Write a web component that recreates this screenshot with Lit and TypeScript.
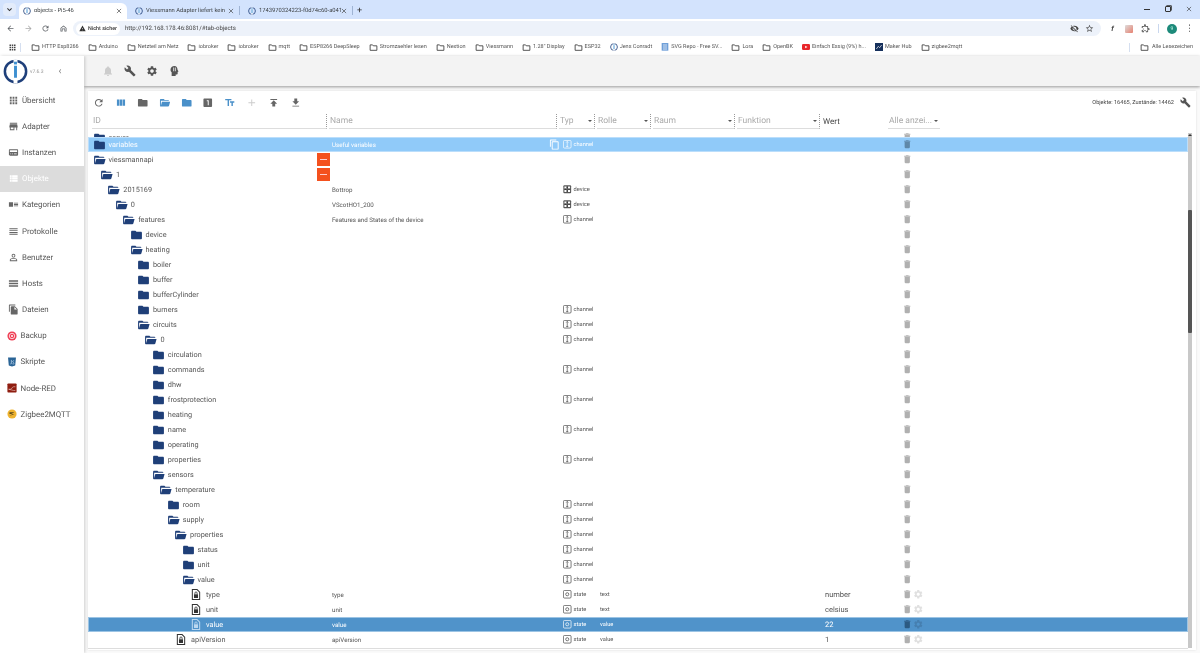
import { LitElement, html, css, svg } from "lit";
import { customElement } from "lit/decorators.js";

const P: Record<string, string> = {
  folder: "M10 4H4c-1.1 0-1.99.9-1.99 2L2 18c0 1.1.9 2 2 2h16c1.1 0 2-.9 2-2V8c0-1.1-.9-2-2-2h-8l-2-2z",
  open: "M19,20H4C2.89,20 2,19.1 2,18V6C2,4.89 2.89,4 4,4H10L12,6H19A2,2 0 0,1 21,8H21L4,8V18L6.14,10H23.21L20.93,18.5C20.7,19.37 19.92,20 19,20Z",
  refresh: "M17.65 6.35C16.2 4.9 14.21 4 12 4c-4.42 0-7.99 3.58-7.99 8s3.57 8 7.99 8c3.73 0 6.84-2.55 7.73-6h-2.08c-.82 2.33-3.04 4-5.65 4-3.31 0-6-2.69-6-6s2.69-6 6-6c1.66 0 3.14.69 4.22 1.78L13 11h7V4l-2.35 2.35z",
  columns: "M10 18h5V5h-5v13zm-6 0h5V5H4v13zM16 5v13h5V5h-5z",
  bell: "M12 22c1.1 0 2-.9 2-2h-4c0 1.1.89 2 2 2zm6-6v-5c0-3.07-1.64-5.64-4.5-6.32V4c0-.83-.67-1.5-1.5-1.5s-1.5.67-1.5 1.5v.68C7.63 5.36 6 7.92 6 11v5l-2 2v1h16v-1l-2-2z",
  wrench: "M22.7 19l-9.1-9.1c.9-2.3.4-5-1.5-6.9-2-2-5-2.4-7.4-1.3L9 6 6 9 1.6 4.7C.4 7.1.9 10.1 2.9 12.1c1.9 1.9 4.6 2.4 6.9 1.5l9.1 9.1c.4.4 1 .4 1.4 0l2.3-2.3c.5-.4.5-1.1.1-1.4z",
  gear: "M19.14 12.94c.04-.3.06-.61.06-.94 0-.32-.02-.64-.07-.94l2.03-1.58c.18-.14.23-.41.12-.61l-1.92-3.32c-.12-.22-.37-.29-.59-.22l-2.39.96c-.5-.38-1.03-.7-1.62-.94l-.36-2.54c-.04-.24-.24-.41-.48-.41h-3.84c-.24 0-.43.17-.47.41l-.36 2.54c-.59.24-1.13.57-1.62.94l-2.39-.96c-.22-.08-.47 0-.59.22L2.74 8.87c-.12.21-.08.47.12.61l2.03 1.58c-.05.3-.09.63-.09.94s.02.64.07.94l-2.03 1.58c-.18.14-.23.41-.12.61l1.92 3.32c.12.22.37.29.59.22l2.39-.96c.5.38 1.03.7 1.62.94l.36 2.54c.05.24.24.41.48.41h3.84c.24 0 .44-.17.47-.41l.36-2.54c.59-.24 1.13-.56 1.62-.94l2.39.96c.22.08.47 0 .59-.22l1.92-3.32c.12-.22.07-.47-.12-.61l-2.01-1.58zM12 15.6c-1.98 0-3.6-1.62-3.6-3.6s1.62-3.6 3.6-3.6 3.6 1.62 3.6 3.6-1.62 3.6-3.6 3.6z",
  trash: "M6 19c0 1.1.9 2 2 2h8c1.1 0 2-.9 2-2V7H6v12zM19 4h-3.5l-1-1h-5l-1 1H5v2h14V4z",
  add: "M19 13h-6v6h-2v-6H5v-2h6V5h2v6h6v2z",
  publish: "M5 4v2h14V4H5zm0 10h4v6h6v-6h4l-7-7-7 7z",
  getapp: "M19 9h-4V3H9v6H5l7 7 7-7zM5 18v2h14v-2H5z",
  text: "M2.5 4v3h5v12h3V7h5V4h-13zm19 5h-9v3h3v7h3v-7h3V9z",
  one: "M19 3H5c-1.1 0-2 .9-2 2v14c0 1.1.9 2 2 2h14c1.1 0 2-.9 2-2V5c0-1.1-.9-2-2-2zm-5 14h-2V9h-2V7h4v10z",
  apps: "M4 8h4V4H4v4zm6 12h4v-4h-4v4zm-6 0h4v-4H4v4zm0-6h4v-4H4v4zm6 0h4v-4h-4v4zm6-10v4h4V4h-4zm-6 4h4V4h-4v4zm6 6h4v-4h-4v4zm0 6h4v-4h-4v4z",
  store: "M20 4H4v2h16V4zm1 10v-2l-1-5H4l-1 5v2h1v6h10v-6h4v6h2v-6h1zm-9 4H6v-4h6v4z",
  inst: "M20 5H4c-1.1 0-2 .9-2 2v10c0 1.1.9 2 2 2h16c1.1 0 2-.9 2-2V7c0-1.1-.9-2-2-2zM4 7h16v4H4V7zm3 9H5v-2h2v2zm4 0H9v-2h2v2zm8 0h-6v-2h6v2z",
  list: "M4 14h4v-4H4v4zm0 5h4v-4H4v4zM4 9h4V5H4v4zm5 5h12v-4H9v4zm0 5h12v-4H9v4zM9 5v4h12V5H9z",
  cats: "M2 7h9v10H2zM13 8h9v2h-9zM13 11h9v2h-9zM13 14h9v2h-9z",
  logs: "M3 15h18v-2H3v2zm0 4h18v-2H3v2zm0-8h18V9H3v2zm0-6v2h18V5H3z",
  person: "M12 5.9c1.16 0 2.1.94 2.1 2.1s-.94 2.1-2.1 2.1S9.9 9.16 9.9 8s.94-2.1 2.1-2.1m0 9c2.97 0 6.1 1.46 6.1 2.1v1.1H5.9V17c0-.64 3.13-2.1 6.1-2.1M12 4C9.79 4 8 5.79 8 8s1.79 4 4 4 4-1.79 4-4-1.79-4-4-4zm0 9c-2.67 0-8 1.34-8 4v3h16v-3c0-2.66-5.33-4-8-4z",
  hosts: "M2 5h20v3.2H2zM2 10.4h20v3.2H2zM2 15.8h20V19H2z",
  files: "M16 1H4c-1.1 0-2 .9-2 2v14h2V3h12V1zm-1 4l6 6v10c0 1.1-.9 2-2 2H7.99C6.89 23 6 22.1 6 21l.01-14c0-1.1.89-2 1.99-2h7zm-1 7h5.5L14 6.5V12z",
  head: "M13 2C8.5 2 5 5.3 5 9.5c0 2.3.9 3.9 2.3 5.1V22h8v-3h2.4c.9 0 1.6-.7 1.6-1.6V14l1.7-.9-1.9-3.6C18.8 5.3 16.8 2 13 2zm-2.4 3.2h1.6v7.2h-1.6zm3.2 0h1.6v7.2h-1.6z",
  copy: "M16 1H4c-1.1 0-2 .9-2 2v14h2V3h12V1zm3 4H8c-1.1 0-2 .9-2 2v14c0 1.1.9 2 2 2h11c1.1 0 2-.9 2-2V7c0-1.1-.9-2-2-2zm0 16H8V7h11v14z",
  back: "M20 11H7.83l5.59-5.59L12 4l-8 8 8 8 1.41-1.41L7.83 13H20v-2z",
  fwd: "M12 4l-1.41 1.41L16.17 11H4v2h12.17l-5.58 5.59L12 20l8-8z",
  home: "M12 4 4 10.5V20h5.5v-6h5v6H20v-9.5L12 4zm6 14h-1.6v-6H7.6v6H6v-6.6l6-4.9 6 4.9V18z",
  star: "M22 9.24l-7.19-.62L12 2 9.19 8.63 2 9.24l5.46 4.73L5.82 21 12 17.27 18.18 21l-1.63-7.03L22 9.24zM12 15.4l-3.76 2.27 1-4.28-3.32-2.88 4.38-.38L12 6.1l1.71 4.04 4.38.38-3.32 2.88 1 4.28L12 15.4z",
  puzzle: "M20.5 11H19V7c0-1.1-.9-2-2-2h-4V3.5a2.5 2.5 0 0 0-5 0V5H4c-1.1 0-2 .9-2 2v3.8h1.5a2.7 2.7 0 0 1 0 5.4H2V20c0 1.1.9 2 2 2h3.8v-1.5a2.7 2.7 0 0 1 5.4 0V22H17c1.1 0 2-.9 2-2v-4h1.5a2.5 2.5 0 0 0 0-5zm0 3H17v6h-2.1a4.7 4.7 0 0 0-8.8 0H4v-2.1a4.7 4.7 0 0 0 0-8.8V7h6V3.5a.5.5 0 0 1 1 0V7h6v6h3.5a.5.5 0 0 1 0 1z",
  warn: "M1 21h22L12 2 1 21zm12-3h-2v-2h2v2zm0-4h-2v-4h2v4z",
  eyeoff: "M12 7c2.76 0 5 2.24 5 5 0 .65-.13 1.26-.36 1.83l2.92 2.92c1.51-1.26 2.7-2.89 3.43-4.75C21.27 7.61 17 4.5 12 4.5c-1.4 0-2.74.25-3.98.7l2.16 2.16C10.74 7.13 11.35 7 12 7zM2 4.27l2.28 2.28.46.46A11.8 11.8 0 0 0 1 12c1.73 4.39 6 7.5 11 7.5 1.55 0 3.03-.3 4.38-.84l.42.42L19.73 22 21 20.73 3.27 3 2 4.27zM7.53 9.8l1.55 1.55c-.05.21-.08.43-.08.65 0 1.66 1.34 3 3 3 .22 0 .44-.03.65-.08l1.55 1.55c-.67.33-1.41.53-2.2.53-2.76 0-5-2.24-5-5 0-.79.2-1.53.53-2.2z",
};

const ico = (name: string, cls = "") =>
  html`<svg class="ico ${cls}" viewBox="0 0 24 24"><path d=${P[name]}></path></svg>`;

const logo = (cls: string) => html`<svg class=${cls} viewBox="0 0 24 24">
  ${svg`<circle cx="12" cy="12" r="10.2" fill="none" stroke="#1e3f7a" stroke-width="2.4"></circle>
  <rect x="10.1" y="0.5" width="3.8" height="23" fill="#fff"></rect>
  <rect x="10.6" y="6.5" width="2.8" height="11.5" fill="#3d8fd1"></rect>
  <rect x="10.6" y="2.6" width="2.8" height="2.6" fill="#3d8fd1"></rect>`}
</svg>`;

const typeIcon = (t: string) => {
  if (t === "channel")
    return html`<svg class="tico" viewBox="0 0 12 12">${svg`<rect x=".6" y=".6" width="10.8" height="10.8" rx="1.6" fill="none" stroke="currentColor" stroke-width="1"></rect><path d="M6 2v8M4.5 3.6 6 2l1.5 1.6M4.5 8.4 6 10l1.5-1.6" fill="none" stroke="currentColor" stroke-width=".9"></path>`}</svg>`;
  if (t === "device")
    return html`<svg class="tico" viewBox="0 0 12 12">${svg`<rect x=".5" y=".5" width="11" height="11" rx="1.4" fill="#555"></rect><path d="M2 2h3v3H2zM7 2h3v3H7zM2 7h3v3H2zM7 7h3v3H7z" fill="#fff"></path><path d="M5 3.5h2M5 8.5h2M3.5 5v2M8.5 5v2" stroke="#222" stroke-width=".8"></path>`}</svg>`;
  return html`<svg class="tico" viewBox="0 0 12 12">${svg`<rect x=".6" y=".6" width="10.8" height="10.8" rx="1.6" fill="none" stroke="currentColor" stroke-width="1"></rect><circle cx="6" cy="6" r="2.2" fill="none" stroke="currentColor" stroke-width="1"></circle>`}</svg>`;
};

const fileIcon = () => html`<svg class="file" viewBox="0 0 10 12">${svg`<path d="M1 .6h5.2L9 3.4V11.4H1z" fill="#fff" stroke="currentColor" stroke-width="1.1"></path><rect x="2.8" y="5.800" width="4.400" height="4" fill="currentColor"></rect><path d="M3.800 6V4.400a1.200 1.200 0 0 1 2.400 0V6" fill="none" stroke="currentColor" stroke-width=".9"></path>`}</svg>`;

interface Row { id: string; lvl: number; ic: "c" | "o" | "f"; name?: string; type?: string; role?: string; val?: string; minus?: boolean; sel?: "light" | "dark"; }

const rows: Row[] = [
  { id: "variables", lvl: 0, ic: "c", name: "Useful variables", type: "channel", sel: "light" },
  { id: "viessmannapi", lvl: 0, ic: "o", minus: true },
  { id: "1", lvl: 1, ic: "o", minus: true },
  { id: "2015169", lvl: 2, ic: "o", name: "Bottrop", type: "device" },
  { id: "0", lvl: 3, ic: "o", name: "VScotHO1_200", type: "device" },
  { id: "features", lvl: 4, ic: "o", name: "Features and States of the device", type: "channel" },
  { id: "device", lvl: 5, ic: "c" },
  { id: "heating", lvl: 5, ic: "o" },
  { id: "boiler", lvl: 6, ic: "c" },
  { id: "buffer", lvl: 6, ic: "c" },
  { id: "bufferCylinder", lvl: 6, ic: "c" },
  { id: "burners", lvl: 6, ic: "c", type: "channel" },
  { id: "circuits", lvl: 6, ic: "o", type: "channel" },
  { id: "0", lvl: 7, ic: "o", type: "channel" },
  { id: "circulation", lvl: 8, ic: "c" },
  { id: "commands", lvl: 8, ic: "c", type: "channel" },
  { id: "dhw", lvl: 8, ic: "c" },
  { id: "frostprotection", lvl: 8, ic: "c", type: "channel" },
  { id: "heating", lvl: 8, ic: "c" },
  { id: "name", lvl: 8, ic: "c", type: "channel" },
  { id: "operating", lvl: 8, ic: "c" },
  { id: "properties", lvl: 8, ic: "c", type: "channel" },
  { id: "sensors", lvl: 8, ic: "o" },
  { id: "temperature", lvl: 9, ic: "o" },
  { id: "room", lvl: 10, ic: "c", type: "channel" },
  { id: "supply", lvl: 10, ic: "o", type: "channel" },
  { id: "properties", lvl: 11, ic: "o", type: "channel" },
  { id: "status", lvl: 12, ic: "c", type: "channel" },
  { id: "unit", lvl: 12, ic: "c", type: "channel" },
  { id: "value", lvl: 12, ic: "o", type: "channel" },
  { id: "type", lvl: 13, ic: "f", name: "type", type: "state", role: "text", val: "number" },
  { id: "unit", lvl: 13, ic: "f", name: "unit", type: "state", role: "text", val: "celsius" },
  { id: "value", lvl: 13, ic: "f", name: "value", type: "state", role: "value", val: "22", sel: "dark" },
  { id: "apiVersion", lvl: 11, ic: "f", name: "apiVersion", type: "state", role: "value", val: "1" },
];

const nav = [
  ["apps", "Übersicht"], ["store", "Adapter"], ["inst", "Instanzen"], ["list", "Objekte"],
  ["cats", "Kategorien"], ["logs", "Protokolle"], ["person", "Benutzer"], ["hosts", "Hosts"],
  ["files", "Dateien"], ["backup", "Backup"], ["js", "Skripte"], ["red", "Node-RED"], ["zig", "Zigbee2MQTT"],
];

const navColor = (k: string) => {
  if (k === "backup") return html`<svg class="navc" viewBox="0 0 24 24">${svg`<circle cx="12" cy="12" r="11" fill="#ef3f55"></circle><circle cx="12" cy="12" r="6.5" fill="none" stroke="#fff" stroke-width="1.8"></circle><circle cx="12" cy="12" r="2.4" fill="#fff"></circle>`}</svg>`;
  if (k === "js") return html`<svg class="navc" viewBox="0 0 24 24">${svg`<path d="M2.5 1h19l-1.8 19.5L12 23l-7.7-2.5z" fill="#2a6496"></path><path d="M10.5 7v9l-2.5.7M13 16.3c2.5 1 4 .2 4-1.5s-3.5-1.8-3.5-3.6S15 8.700 17 9.300" fill="none" stroke="#cfe3f4" stroke-width="1.600"></path>`}</svg>`;
  if (k === "red") return html`<svg class="navc" viewBox="0 0 24 24">${svg`<rect x="1" y="1" width="22" height="22" rx="2" fill="#8f1d10"></rect><path d="M4 15h4c4 0 4-6 8-6h4M4 15c5 0 7 3 12 3h4" fill="none" stroke="#e8c3bd" stroke-width="1.500"></path>`}</svg>`;
  return html`<svg class="navc" viewBox="0 0 24 24">${svg`<circle cx="12" cy="12" r="11" fill="#eeb32f"></circle><path d="M6 8h12l-8 4h8L6 17l7-5H6z" fill="#5b4a1a"></path>`}</svg>`;
};

const marks: [string, string][] = [
  ["f", "HTTP Esp8266"], ["f", "Arduino"], ["f", "Netzteil am Netz"], ["f", "iobroker"], ["f", "iobroker"],
  ["f", "mqtt"], ["f", "ESP8266 DeepSleep"], ["f", "Stromzaehler lesen"], ["f", "Nextion"], ["f", "Viessmann"],
  ["f", '1.28" Display'], ["f", "ESP32"], ["io", "Jens Conradt"], ["svg", "SVG Repo - Free SV..."], ["f", "Lora"],
  ["f", "OpenBK"], ["yt", "Einfach Essig (9%) h..."], ["mh", "Maker Hub"], ["f", "zigbee2mqtt"],
];

const bmFolder = () => html`<svg class="bmf" viewBox="0 0 24 24"><path d="M3 5h6.500l2 2.500H21v12H3z" fill="none" stroke="#444" stroke-width="2.400"></path></svg>`;
const bmIcon = (k: string) => {
  if (k === "io") return logo("bmi");
  if (k === "svg") return html`<svg class="bmi" viewBox="0 0 12 12">${svg`<rect width="10" height="11.500" x="1" fill="#6f9fd8"></rect><path d="M3 3h6M3 6h6M3 9h6" stroke="#fff" stroke-width="1"></path>`}</svg>`;
  if (k === "yt") return html`<svg class="bmi" viewBox="0 0 12 12">${svg`<rect y="1.500" width="12" height="9" rx="2" fill="#e8262a"></rect><path d="M4.800 4v4l3.400-2z" fill="#fff"></path>`}</svg>`;
  if (k === "mh") return html`<svg class="bmi" viewBox="0 0 12 12">${svg`<rect width="12" height="12" fill="#16305c"></rect><path d="M2 9l3-4 2 2 3-4" stroke="#fff" stroke-width="1" fill="none"></path>`}</svg>`;
  return bmFolder();
};

const winClose = () => html`<svg class="wc" viewBox="0 0 10 10"><path d="M1.500 1.500l7 7M8.500 1.500l-7 7" stroke="#333" stroke-width="1" fill="none"></path></svg>`;

@customElement("app-root")
export class AppRoot extends LitElement {
  static styles = css`
    :host { display: block; width: 1200px; height: 653px; overflow: hidden; font-family: Roboto, "Liberation Sans", sans-serif; background: #fff; color: #555; text-rendering: geometricPrecision; }
    * { box-sizing: border-box; }
    .page { display: flex; flex-direction: column; height: 653px; will-change: transform; }
    .ico { width: 1em; height: 1em; fill: currentColor; flex: none; display: block; }

    .tabs { height: 19px; background: #d3e3fd; display: flex; align-items: flex-end; flex: none; font-size: 5.800px; color: #3c4043; }
    .tabmenu { width: 13px; height: 13px; margin: 0 3px 3px 3px; border-radius: 4px; background: #e3ecfb; display: flex; align-items: center; justify-content: center; }
    .tabmenu svg { width: 7px; height: 7px; }
    .tab { display: flex; align-items: center; height: 16px; padding: 0 5px 0 3px; gap: 3px; flex: none; }
    .tab.active { width: 108px; background: #fff; border-radius: 6px 6px 0 0; padding-left: 4px; margin-right: 5px; }
    .tab.t2 { width: 107px; }
    .tab.t3 { width: 107px; margin-left: 5px; }
    .tab .fav { width: 8px; height: 8px; flex: none; }
    .tab .t { flex: 1; white-space: nowrap; min-width: 0; }
    .wc { width: 6px; height: 6px; flex: none; display: block; }
    .tabsep { width: 1px; height: 9px; background: #9fb4d4; margin-bottom: 4px; flex: none; }
    .plus { font-size: 9px; margin: 0 0 3px 4px; color: #333; }
    .win { margin-left: auto; display: flex; align-items: center; gap: 15px; padding: 0 8px 6px 0; height: 14px; }
    .win i { display: block; width: 6px; flex: none; }
    .win .mn { height: 1px; background: #333; }
    .win .rs { height: 6px; border: 1px solid #333; border-radius: 1px; box-shadow: 1px -1px 0 -.2px #333; }

    .omni-row { height: 19px; display: flex; align-items: center; flex: none; padding: 0 0 0 6px; color: #5f6368; font-size: 9px; }
    .navbtns { display: flex; gap: 8.500px; width: 67px; }
    .omni { width: 1028px; height: 15px; background: #edf2fa; border-radius: 8px; display: flex; align-items: center; padding-left: 3px; font-size: 6.100px; color: #333; }
    .chip { width: 44px; height: 12px; background: #fff; border-radius: 6px; display: flex; align-items: center; justify-content: center; gap: 2px; font-size: 5.400px; font-weight: 500; }
    .chip .ico { font-size: 7px; }
    .url { margin-left: 5px; color: #444; }
    .omni-r { margin-left: auto; display: flex; gap: 6px; padding-right: 7px; font-size: 9px; color: #444; }
    .exts { display: flex; align-items: center; margin-left: 7px; gap: 8px; font-size: 9px; color: #444; }
    .exts .f { width: 9px; text-align: center; font-weight: 700; font-style: italic; font-size: 7px; }
    .exts .pic { width: 8px; height: 8px; background: linear-gradient(135deg,#ddd,#e7806f); border-radius: 1px; }
    .exts .vsep { width: 1px; height: 9px; background: #c9d7ee; }
    .avatar { width: 10px; height: 10px; border-radius: 50%; background: #1d8a7a; color: #cfe; font-size: 5px; display: flex; align-items: center; justify-content: center; }

    .marks { height: 18px; display: flex; align-items: center; flex: none; padding-left: 8px; font-size: 5.500px; color: #555; white-space: nowrap; }
    .marks .ap { font-size: 9px; color: #444; }
    .marks .sp { width: 1px; height: 9px; background: #d5dff0; margin: 0 3px 0 3px; }
    .marks .pad { width: 7px; flex: none; }
    .bm { display: flex; align-items: center; gap: 2px; margin-right: 9px; }
    .bmf { width: 9px; height: 9px; flex: none; }
    .bmi { width: 8px; height: 8px; flex: none; }
    .all { margin-left: auto; margin-right: 7px; display: flex; align-items: center; gap: 3px; }
    .all .vs { width: 1px; height: 9px; background: #d5dff0; margin-right: 7px; }

    .app { flex: 1; display: flex; min-height: 0; background: #fafafa; }
    .side { width: 84px; flex: none; background: #fff; box-shadow: 1px 0 3px rgba(0,0,0,.18); display: flex; flex-direction: column; z-index: 2; }
    .brand { height: 31px; flex: none; display: flex; align-items: center; padding: 0 0 0 3px; }
    .brand .lg { width: 25px; height: 25px; }
    .brand .ver { font-size: 5px; color: #999; margin-left: 2px; }
    .brand .chev { margin-left: 15px; font-size: 10px; color: #777; }
    .nav { height: 26.200px; flex: none; display: flex; align-items: center; gap: 3px; padding-left: 8px; font-size: 7.900px; color: #555; }
    .nav .ico { font-size: 11px; color: #666; }
    .nav.on { background: #dcdcdc; color: #fff; }
    .nav.on .ico { color: #fff; }
    .nav.col { padding-left: 7px; gap: 3.500px; }
    .navc { width: 10px; height: 10px; flex: none; }

    .main { flex: 1; min-width: 0; display: flex; flex-direction: column; }
    .hdr { height: 30px; flex: none; background: #f3f3f3; box-shadow: 0 1px 3px rgba(0,0,0,.4); display: flex; align-items: center; padding: 0 0 1px 18px; gap: 10px; font-size: 12px; color: #555; z-index: 1; }
    .hdr .dim { color: #ccc; }

    .card { flex: 1; margin: 5px 4px 3px 4px; background: #fff; box-shadow: 0 0 2px rgba(0,0,0,.12); display: flex; flex-direction: column; min-height: 0; }
    .tools { height: 23px; flex: none; display: flex; align-items: center; padding-left: 5px; font-size: 11.500px; }
    .tools .ico { margin-right: 10.400px; }
    .tools .g { color: #666; } .tools .b { color: #4a90c9; } .tools .l { color: #ccc; }
    .stats { margin-left: auto; display: flex; align-items: center; font-size: 5.600px; color: #444; padding-right: 5px; }
    .stats .ico { font-size: 11px; margin: 0 0 0 6px; color: #555; }
    .filters { height: 15px; flex: none; display: flex; padding-left: 4px; font-size: 8.500px; color: #aaa; gap: 2px; }
    .fl { border-bottom: 1.500px solid #ddd; display: flex; align-items: center; justify-content: space-between; padding: 0 1px 0 1px; border-right: 1px dotted #999; height: 15px; flex: none; }
    .fl .ar { width: 0; height: 0; border: 2.500px solid transparent; border-top-color: #555; border-bottom: 0; margin-right: 1px; }
    .fl.plain { border-bottom: 0; border-right: 0; color: #444; font-size: 8px; }
    .fl.last { border-right: 0; margin-left: 24px; }

    .bodywrap { flex: 1; min-height: 0; display: flex; margin-top: 1px; }
    .rows { flex: 1; min-width: 0; display: flex; flex-direction: column; overflow: hidden; border-bottom: 1.500px solid #ddd; margin-bottom: 1px; }
    .row { height: 15px; flex: none; display: grid; grid-template-columns: 244px 231px 37px 225px 77px 1fr; align-items: center; color: #555; font-size: 7.300px; }
    .row.clip { height: 7px; align-items: end; overflow: hidden; }
    .row.clip > * { height: 15px; }
    .row.light { background: #90caf9; color: #fff; box-shadow: inset 0 0 0 1px #bbdefb; }
    .row.dark { background: #5093ca; color: #fff; box-shadow: inset 0 0 0 1px #9cc4e4; }
    .idc { display: flex; align-items: center; min-width: 0; }
    .fold { font-size: 14px; color: #1f3f78; margin-right: 3px; width: 13px; }
    .file { width: 10px; height: 11px; color: #333; flex: none; margin: 0 5px 0 2px; }
    .row.dark .file { color: #bcd8f0; }
    .row.dark .file path:first-child { fill: #5093ca; }
    .minus { width: 13px; height: 13px; background: #f4511e; margin-left: auto; margin-right: 2px; flex: none; display: flex; align-items: center; justify-content: center; }
    .minus::before { content: ""; width: 7px; height: 1px; background: #fcc; }
    .namec { font-size: 6.200px; display: flex; align-items: center; justify-content: space-between; padding-right: 3px; min-width: 0; }
    .namec .ico { font-size: 11px; color: #fff; }
    .typec { display: flex; align-items: center; gap: 2px; font-size: 5.700px; }
    .tico { width: 8.500px; height: 8.500px; color: #444; flex: none; }
    .row.light .tico, .row.dark .tico { color: #fff; }
    .rolec { font-size: 5.700px; }
    .valc { font-size: 7.500px; }
    .btns { display: flex; align-items: center; font-size: 10.500px; color: #b0b0b0; }
    .btns .gr { color: #e0e0e0; margin-left: .5px; }
    .row.light .btns { color: #5f88a8; }
    .row.dark .btns { color: #2c5a82; }
    .row.dark .btns .gr { color: #467fb0; }

    .sb { width: 4px; flex: none; background: #c8c8c8; display: flex; flex-direction: column; margin: 3px 4px 2px 0; }
    .sb .up { height: 4px; flex: none; display: flex; justify-content: center; align-items: center; }
    .sb .up::before { content: ""; border: 2px solid transparent; border-bottom-color: #333; border-top: 0; }
    .sb .th { height: 123px; flex: none; background: #555; margin-top: 73px; border-radius: 1px; }
  `;

  private renderRow(r: Row) {
    const cls = `row ${r.sel ?? ""}`;
    return html`<div class=${cls}>
      <div class="idc" style="padding-left:${4.5 + r.lvl * 7.42}px">
        ${r.ic === "f" ? fileIcon() : ico(r.ic === "o" ? "open" : "folder", "fold")}
        <span>${r.id}</span>
        ${r.minus ? html`<span class="minus"></span>` : ""}
      </div>
      <div class="namec"><span>${r.name ?? ""}</span>${r.sel === "light" ? ico("copy") : ""}</div>
      <div class="typec">${r.type ? html`${typeIcon(r.type)}<span>${r.type}</span>` : ""}</div>
      <div class="rolec">${r.role ?? ""}</div>
      <div class="valc">${r.val ?? ""}</div>
      <div class="btns">${ico("trash")}${r.ic === "f" ? ico("gear", "gr") : ""}</div>
    </div>`;
  }

  render() {
    return html`<div class="page">
      <div class="tabs">
        <div class="tabmenu"><svg viewBox="0 0 10 10"><path d="M2 3.500 5 6.500 8 3.500" fill="none" stroke="#333" stroke-width="1.500"></path></svg></div>
        <div class="tab active">${logo("fav")}<span class="t">objects - Pi5-46</span>${winClose()}</div>
        <div class="tab t2">${logo("fav")}<span class="t">Viessmann Adapter liefert kein</span>${winClose()}</div>
        <div class="tabsep"></div>
        <div class="tab t3">${logo("fav")}<span class="t">1743970324223-f0d74c60-a041</span>${winClose()}</div>
        <div class="tabsep"></div>
        <span class="plus">+</span>
        <div class="win"><i class="mn"></i><i class="rs"></i>${winClose()}</div>
      </div>
      <div class="omni-row">
        <div class="navbtns">${ico("back")}<span style="color:#aaa">${ico("fwd")}</span>${ico("refresh")}${ico("home")}</div>
        <div class="omni">
          <span class="chip">${ico("warn")}Nicht sicher</span>
          <span class="url">http://192.168.178.46:8081/#tab-objects</span>
          <span class="omni-r">${ico("eyeoff")}${ico("star")}</span>
        </div>
        <div class="exts"><span class="f">f</span><span class="pic"></span>${ico("puzzle")}<span class="vsep"></span><span class="avatar">9</span><span>⋮</span></div>
      </div>
      <div class="marks">
        <span class="ap">${ico("apps")}</span><span class="sp"></span><span class="pad"></span>
        ${marks.map(([k, t]) => html`<span class="bm">${bmIcon(k)}<span>${t}</span></span>`)}
        <span class="all"><span class="vs"></span>${bmFolder()}<span>Alle Lesezeichen</span></span>
      </div>
      <div class="app">
        <aside class="side">
          <div class="brand">${logo("lg")}<span class="ver">v7.6.3</span><span class="chev">‹</span></div>
          ${nav.map(([k, t]) => {
            const colored = ["backup", "js", "red", "zig"].includes(k);
            return html`<div class="nav ${t === "Objekte" ? "on" : ""} ${colored ? "col" : ""}">${colored ? navColor(k) : ico(k)}<span>${t}</span></div>`;
          })}
        </aside>
        <div class="main">
          <div class="hdr">${ico("bell", "dim")}${ico("wrench")}${ico("gear")}${ico("head")}</div>
          <div class="card">
            <div class="tools">
              <span class="g">${ico("refresh")}</span><span class="b">${ico("columns")}</span><span class="g">${ico("folder")}</span>
              <span class="b">${ico("open")}</span><span class="b">${ico("folder")}</span><span class="g">${ico("one")}</span>
              <span class="b">${ico("text")}</span><span class="l">${ico("add")}</span><span class="g">${ico("publish")}</span><span class="g">${ico("getapp")}</span>
              <span class="stats">Objekte: 16465, Zustände: 14462${ico("wrench")}</span>
            </div>
            <div class="filters">
              <div class="fl" style="width:235px">ID</div>
              <div class="fl" style="width:228px">Name</div>
              <div class="fl" style="width:36px">Typ<i class="ar"></i></div>
              <div class="fl" style="width:54px">Rolle<i class="ar"></i></div>
              <div class="fl" style="width:82px">Raum<i class="ar"></i></div>
              <div class="fl" style="width:83px">Funktion<i class="ar"></i></div>
              <div class="fl plain" style="width:40px">Wert</div>
              <div class="fl last" style="width:52px">Alle anzei...<i class="ar"></i></div>
            </div>
            <div class="bodywrap">
              <div class="rows">
                <div class="row clip">
                  <div class="idc" style="padding-left:4.500px">${ico("folder", "fold")}<span>server</span></div>
                  <div></div><div></div><div></div><div></div>
                  <div class="btns">${ico("trash")}</div>
                </div>
                ${rows.map((r) => this.renderRow(r))}
              </div>
              <div class="sb"><div class="up"></div><div class="th"></div></div>
            </div>
          </div>
        </div>
      </div>
    </div>`;
  }
}
